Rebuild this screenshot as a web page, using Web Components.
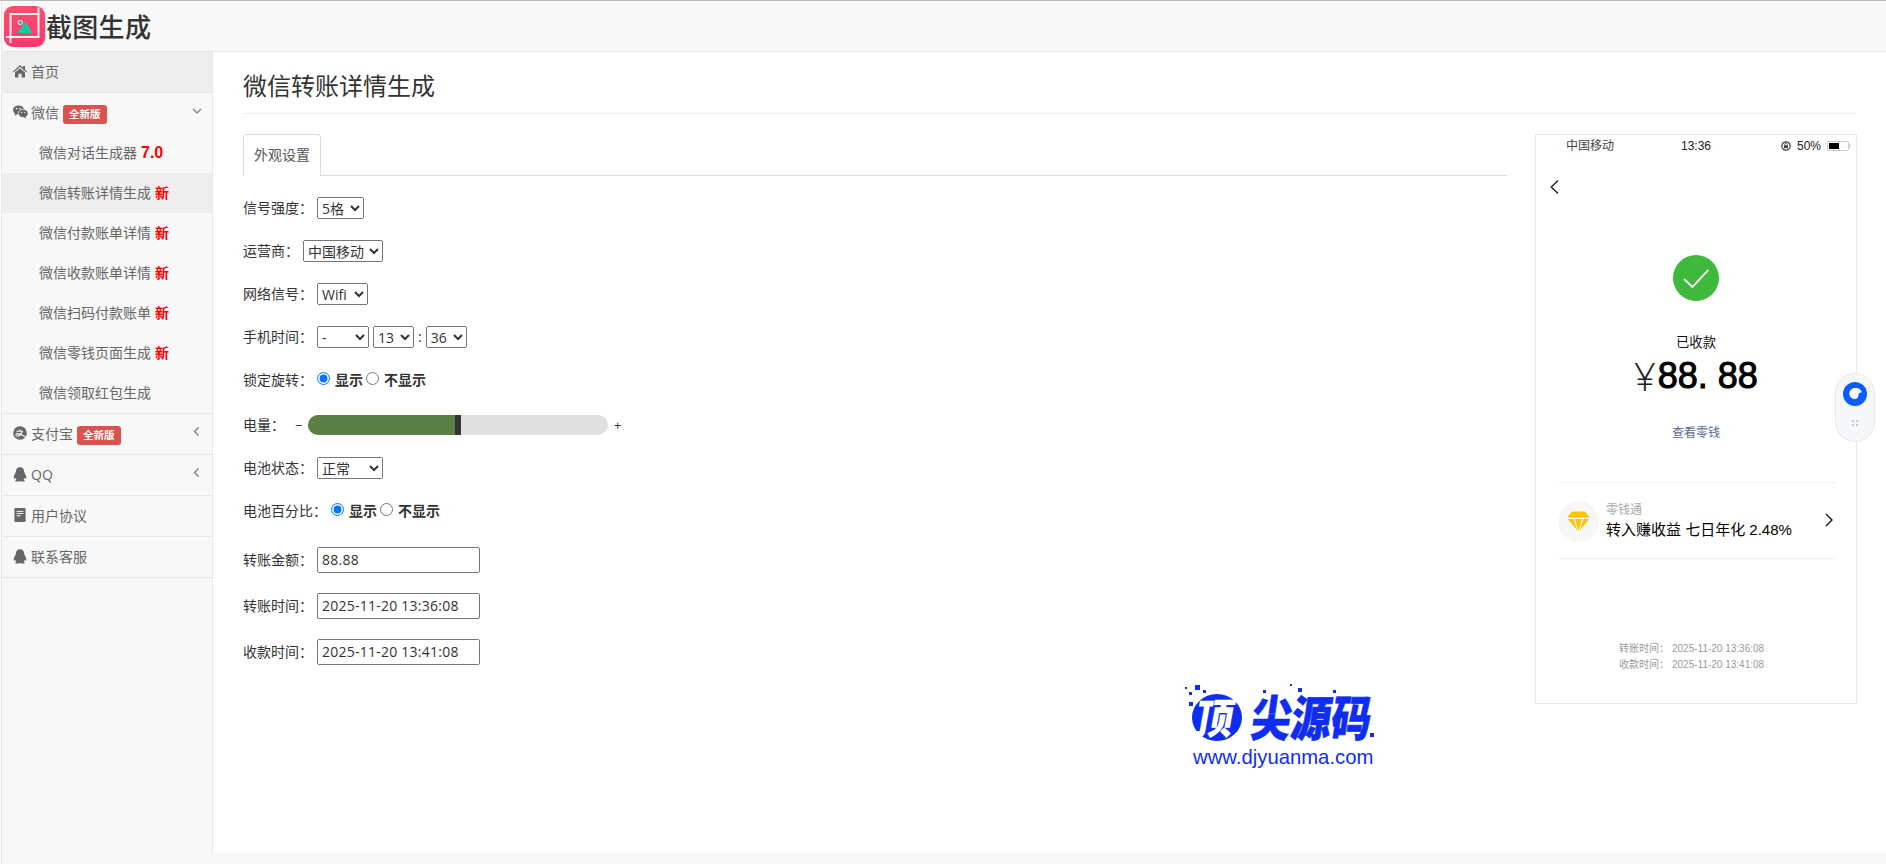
<!DOCTYPE html>
<html lang="zh">
<head>
<meta charset="utf-8">
<title>微信转账详情生成</title>
<style>
  html, body { margin: 0; background: #fff; }
  body {
    font: 14px/20px "Open Sans", "Noto Sans CJK SC", sans-serif;
    color: #333;
  }
</style>
</head>
<body>
<screen-app>
  <brand-bar slot="top">截图生成</brand-bar>
  <side-nav slot="side">
    <nav-row active icon="home">首页</nav-row>
    <nav-row icon="wechat" badge="全新版" arrow="down" open>
      微信
      <sub-item slot="sub" tag="7.0" big>微信对话生成器</sub-item>
      <sub-item slot="sub" tag="新" active>微信转账详情生成</sub-item>
      <sub-item slot="sub" tag="新">微信付款账单详情</sub-item>
      <sub-item slot="sub" tag="新">微信收款账单详情</sub-item>
      <sub-item slot="sub" tag="新">微信扫码付款账单</sub-item>
      <sub-item slot="sub" tag="新">微信零钱页面生成</sub-item>
      <sub-item slot="sub">微信领取红包生成</sub-item>
    </nav-row>
    <nav-row icon="alipay" badge="全新版" arrow="left">支付宝</nav-row>
    <nav-row icon="qq" arrow="left">QQ</nav-row>
    <nav-row icon="doc">用户协议</nav-row>
    <nav-row icon="qq">联系客服</nav-row>
  </side-nav>
  <page-main slot="main" heading="微信转账详情生成">
    <settings-form>
      <form-row label="信号强度："><select style="width:47px"><option>5格</option></select></form-row>
      <form-row label="运营商："><select style="width:80px"><option>中国移动</option></select></form-row>
      <form-row label="网络信号："><select style="width:51px"><option>Wifi</option></select></form-row>
      <form-row label="手机时间：">
        <select style="width:52px"><option>-</option></select>
        <select style="width:41px"><option>13</option></select>
        <span>:</span>
        <select style="width:41px"><option>36</option></select>
      </form-row>
      <form-row label="锁定旋转：">
        <radio-pair name="lock"></radio-pair>
      </form-row>
      <form-row class="battery" label="电量：">
        <battery-slider value="49"></battery-slider>
      </form-row>
      <form-row label="电池状态："><select style="width:66px"><option>正常</option></select></form-row>
      <form-row label="电池百分比：">
        <radio-pair name="percent"></radio-pair>
      </form-row>
      <form-row class="field first" label="转账金额："><input value="88.88"></form-row>
      <form-row class="field" label="转账时间："><input value="2025-11-20 13:36:08"></form-row>
      <form-row class="field" label="收款时间："><input value="2025-11-20 13:41:08"></form-row>
    </settings-form>
    <phone-preview slot="preview"></phone-preview>
    <site-watermark slot="over"></site-watermark>
    <float-widget slot="over"></float-widget>
  </page-main>
</screen-app>

<script>
const ICONS = {
  home: `<svg viewBox="0 0 14 14" width="14" height="14"><path fill="#666" d="M7 1 L10 3.8 V2 H12 V5.7 L14.2 7.8 L13.4 8.6 L7 2.8 L.6 8.6 L-.2 7.8 Z M2 8.6 L7 4.2 L12 8.6 V13.6 H8.6 V9.8 H5.4 V13.6 H2 Z"/></svg>`,
  wechat: `<svg viewBox="0 0 15 14" width="15" height="14"><ellipse cx="5.6" cy="5" rx="5.6" ry="4.6" fill="#666"/><path fill="#666" d="M2 8 L1.6 11 L5 8.6 Z"/><ellipse cx="10.2" cy="8.4" rx="5" ry="4.2" fill="#666" stroke="#f8f8f8" stroke-width=".8"/><path fill="#666" d="M12.4 11.4 L13.4 13.6 L10.6 12.2 Z"/><circle cx="3.7" cy="3.6" r=".8" fill="#f8f8f8"/><circle cx="7" cy="3.6" r=".8" fill="#f8f8f8"/><circle cx="8.6" cy="7.4" r=".6" fill="#f8f8f8"/><circle cx="11.8" cy="7.4" r=".6" fill="#f8f8f8"/></svg>`,
  alipay: `<svg viewBox="0 0 14 14" width="14" height="14"><circle cx="7" cy="7" r="6.8" fill="#666"/><path fill="none" stroke="#f8f8f8" stroke-width="1.1" d="M3.4 5.2 H10 M6.8 3.4 V5.2 M9.2 5.4 C8.4 8.4 6 10.4 4 10 C2.2 9.6 2.8 7.6 4.8 7.6 C7 7.6 9.6 9.6 12.6 11"/></svg>`,
  qq: `<svg viewBox="0 0 14 15" width="14" height="15"><path fill="#666" d="M7 .2 C9.8 .2 11 2.2 11.1 4.4 C11.1 5 11.2 5.4 11.6 6 C12.6 7.6 13.4 9.4 13.2 11 C13 12 12.4 11.8 11.7 10.7 C11.5 11.6 11.1 12.3 10.5 12.8 C11.4 13.1 11.9 13.5 11.7 14 C11.4 14.7 9.4 14.8 7.9 14.2 L6.1 14.2 C4.6 14.8 2.6 14.7 2.3 14 C2.1 13.5 2.6 13.1 3.5 12.8 C2.9 12.3 2.5 11.6 2.3 10.7 C1.6 11.8 1 12 .8 11 C.6 9.4 1.4 7.6 2.4 6 C2.8 5.4 2.9 5 2.9 4.4 C3 2.2 4.2 .2 7 .2 Z"/></svg>`,
  doc: `<svg viewBox="0 0 12 14" width="12" height="14"><path fill="#666" d="M1.6 0 H10.4 Q11.6 0 11.6 1.2 V12.8 Q11.6 14 10.4 14 H1.6 Q.4 14 .4 12.8 V1.2 Q.4 0 1.6 0 Z"/><path stroke="#f8f8f8" stroke-width="1" d="M2.6 3.4 H9.4 M2.6 5.6 H9.4 M2.6 7.8 H6.6"/></svg>`
};

function define(name, markup, props = {}) {
  const template = document.createElement("template");
  template.innerHTML = markup;
  customElements.define(name, class extends HTMLElement {
    constructor() {
      super();
      this.attachShadow({ mode: "open" }).append(template.content.cloneNode(true));
    }
    connectedCallback() {
      if (props.init) props.init.call(this, this.shadowRoot);
    }
  });
}

define("screen-app", `
  <style>
    :host { display: block; height: 865px; overflow: hidden; position: relative; }
    #line { height: 1px; background: #bbb; }
    #wrap {
      margin-left: 1px; border-left: 1px solid #e7e7e7; background: #f8f8f8;
      height: 863px; display: flex; flex-direction: column;
    }
    #body { display: flex; height: 801px; }
  </style>
  <div id="line"></div>
  <div id="wrap">
    <slot name="top"></slot>
    <div id="body">
      <slot name="side"></slot>
      <slot name="main"></slot>
    </div>
  </div>
`);

define("brand-bar", `
  <style>
    :host {
      display: flex; align-items: center; height: 50px; flex: none;
      border-bottom: 1px solid #e7e7e7; padding-left: 2px;
      font-size: 26px; font-weight: 500; color: #333; letter-spacing: .3px;
      font-family: "Noto Sans CJK SC", sans-serif;
    }
    svg { display: block; margin-top: 1px; }
    span { margin-left: 1px; }
  </style>
  <svg width="41" height="41" viewBox="0 0 41 41">
    <defs><linearGradient id="g" x1="0" y1="0" x2="0" y2="1"><stop offset="0" stop-color="#ff4d6e"/><stop offset="1" stop-color="#f93a6c"/></linearGradient></defs>
    <rect width="41" height="41" rx="9" fill="url(#g)"/>
    <path fill="#fff" fill-opacity=".9" d="M5.5 7 H35.5 V9 H7.5 V37 H5.5 Z M33.5 1.5 H35.5 V32 H2 V30 H33.5 Z"/>
    <path fill="#17c9a3" d="M13.3 27 L18.6 19.6 L21 16 L24 19.6 L28.2 27 Z"/>
    <circle cx="16.2" cy="16.4" r="2.2" fill="#17c9a3" stroke="#fff" stroke-width=".8"/>
  </svg>
  <span><slot></slot></span>
`);

define("side-nav", `
  <style>
    :host {
      display: block; width: 210px; flex: none; box-sizing: content-box;
      border-right: 1px solid #e7e7e7; background: #f8f8f8; color: #666;
    }
  </style>
  <slot></slot>
`);

define("nav-row", `
  <style>
    :host { display: block; border-bottom: 1px solid #e7e7e7; }
    #head {
      display: flex; align-items: center; height: 40px; padding-left: 9px;
      position: relative; color: #666;
    }
    :host([active]) #head { background: #eee; }
    #ico { width: 18px; display: flex; justify-content: center; margin-top: -2px; flex: none; }
    #txt { margin-left: 2px; }
    #badge {
      display: none; margin-left: 4px; margin-top: 3px; background: #d9534f; color: #fff; border-radius: 3px;
      font-size: 10.5px; font-weight: 700; line-height: 19px; height: 19px; padding: 0 6px;
    }
    #arrow { display: none; position: absolute; right: 9px; top: 12px; }
  </style>
  <div id="head">
    <span id="ico"></span><span id="txt"><slot></slot></span><span id="badge"></span>
    <svg id="arrow" width="12" height="12" viewBox="0 0 12 12"></svg>
  </div>
  <slot name="sub"></slot>
`, {
  init(root) {
    root.getElementById("ico").innerHTML = ICONS[this.getAttribute("icon")] || "";
    const badge = this.getAttribute("badge");
    if (badge) {
      const b = root.getElementById("badge");
      b.textContent = badge;
      b.style.display = "inline-block";
    }
    const arrow = this.getAttribute("arrow");
    if (arrow) {
      const a = root.getElementById("arrow");
      a.style.display = "block";
      a.innerHTML = arrow === "down"
        ? `<path d="M2 4 L6 8 L10 4" fill="none" stroke="#777" stroke-width="1.2"/>`
        : `<path d="M7.5 1.5 L3.5 5.5 L7.5 9.5" fill="none" stroke="#777" stroke-width="1.2"/>`;
    }
  }
});

define("sub-item", `
  <style>
    :host {
      display: flex; align-items: center; height: 40px; padding-left: 37px; color: #666;
    }
    :host([active]) { background: #eee; }
    b { color: #f00; margin-left: 4px; }
    :host([big]) b { font-size: 16px; margin-left: 4px; font-family: "Liberation Sans", sans-serif; }
  </style>
  <slot></slot><b></b>
`, {
  init(root) {
    root.querySelector("b").textContent = this.getAttribute("tag") || "";
  }
});

define("page-main", `
  <style>
    :host { display: block; flex: 1; background: #fff; padding: 0 29px 0 30px; position: relative; min-width: 0; }
    h1 {
      font-size: 24px; font-weight: 400; line-height: 34px; margin: 0; padding-top: 16px; padding-bottom: 11px;
      border-bottom: 1px solid #eee; color: #333; font-family: "Noto Sans CJK SC", sans-serif;
    }
    #cols { display: grid; grid-template-columns: 1fr 322px; column-gap: 28px; margin-top: 20px; }
    #tabs { border-bottom: 1px solid #ddd; height: 41px; display: flex; }
    #tab {
      box-sizing: border-box; padding: 0 10px; border: 1px solid #ddd; border-bottom: 0;
      border-radius: 4px 4px 0 0; background: #fff; line-height: 40px; color: #555; margin-bottom: -1px; height: 42px;
    }
  </style>
  <h1></h1>
  <div id="cols">
    <div>
      <div id="tabs"><div id="tab">外观设置</div></div>
      <slot></slot>
    </div>
    <slot name="preview"></slot>
  </div>
  <slot name="over"></slot>
`, {
  init(root) {
    root.querySelector("h1").textContent = this.getAttribute("heading");
  }
});

define("settings-form", `
  <style>:host { display: block; padding-top: 11px; }</style>
  <slot></slot>
`);

define("form-row", `
  <style>
    :host { display: flex; align-items: center; height: 42.8px; gap: 4px; color: #333; }
    :host(.battery) { margin: 3px 0 0; gap: 10px; }
    :host(.field) { height: 46px; }
    :host(.first) { margin-top: 4.5px; }
    ::slotted(select) {
      font: 14px "Open Sans", "Noto Sans CJK SC", sans-serif; height: 22px; padding: 0; color: #333;
    }
    ::slotted(input) {
      font: 14px "Open Sans", "Noto Sans CJK SC", sans-serif; color: #333; width: 163px; height: 26px;
      box-sizing: border-box; padding: 1px 4px; border: 1px solid #767676; border-radius: 2px; letter-spacing: .24px;
    }
  </style>
  <span></span><slot></slot>
`, {
  init(root) {
    root.querySelector("span").textContent = this.getAttribute("label");
  }
});

define("radio-pair", `
  <style>
    :host { display: flex; align-items: center; font-weight: 700; }
    input { margin: 0 5px 2px 0; width: 13px; height: 13px; }
    label { display: flex; align-items: center; margin-right: 3px; }
  </style>
  <label><input type="radio" name="a" checked>显示</label>
  <label><input type="radio" name="a">不显示</label>
`);

define("battery-slider", `
  <style>
    :host { display: flex; align-items: center; font-size: 13px; }
    #track { width: 300px; height: 20px; border-radius: 10px; background: #e0e0e0; margin: 0 6px; overflow: hidden; display: flex; }
    #fill { height: 100%; background: #5b7f47; }
    #thumb { width: 6px; height: 100%; background: #333; }
    span { width: 7px; text-align: center; }
  </style>
  <span>−</span>
  <div id="track"><div id="fill"></div><div id="thumb"></div></div>
  <span>+</span>
`, {
  init(root) {
    root.getElementById("fill").style.width = this.getAttribute("value") + "%";
  }
});

define("phone-preview", `
  <style>
    :host {
      display: block; height: 570px; box-sizing: border-box; border: 1px solid #e7e7e7; background: #fff;
      font-family: "Liberation Sans", "Noto Sans CJK SC", sans-serif; color: #111;
    }
    #status {
      display: grid; grid-template-columns: 1fr auto 1fr; height: 21px; align-items: center; font-size: 12px;
      padding: 0 5px; color: #222;
    }
    #status .carrier { color: #444; padding-left: 25px; }
    #status .right { display: flex; justify-content: flex-end; align-items: center; gap: 6px; }
    #back { display: block; margin: 24px 0 0 14px; }
    #check { display: block; margin: 61px auto 0; }
    #state { text-align: center; margin-top: 32px; font-size: 13.3px; line-height: 20px; }
    #amount {
      display: flex; justify-content: center; align-items: center; height: 40px; margin-top: 3px;
      font-size: 36px; line-height: 40px; color: #000;
    }
    #amount i { font: 300 38px/40px "Open Sans", sans-serif; color: #222; margin-right: 2px; }
    #amount b { font-weight: 400; -webkit-text-stroke: 1px #000; white-space: pre; }
    #link { text-align: center; margin-top: 29px; font-size: 12px; line-height: 16px; color: #576b95; }
    #row {
      margin: 41px 21px 0 22px; height: 75px; border-top: 1px solid #f1f1f1; border-bottom: 1px solid #f1f1f1;
      display: flex; align-items: center; position: relative;
    }
    #coin {
      width: 41px; height: 41px; border-radius: 50%; background: #f7f7f7; flex: none;
      display: flex; align-items: center; justify-content: center; margin-top: 1px;
    }
    #info { margin-left: 7px; }
    #info div:first-child { font-size: 12px; line-height: 17px; color: #aaa; }
    #info div:last-child { font-size: 15px; line-height: 21px; color: #000; white-space: pre; }
    #go { position: absolute; right: 2px; top: 30px; }
    #times { margin: 82px 0 0 83px; font-size: 10px; line-height: 16px; color: #999; }
    #times span { display: inline-block; width: 53px; }
  </style>
  <div id="status">
    <span class="carrier">中国移动</span>
    <span>13:36</span>
    <span class="right">
      <svg width="10" height="10" viewBox="0 0 10 10"><circle cx="5" cy="5" r="4.2" fill="none" stroke="#444" stroke-width="1.2"/><rect x="3" y="4.2" width="4" height="3" fill="#444"/><path d="M3.8 4.2 V3.3 a1.2 1.2 0 0 1 2.4 0 V4.2" fill="none" stroke="#444" stroke-width=".8"/></svg>
      <span>50%</span>
      <svg width="24" height="10" viewBox="0 0 24 10"><rect x=".5" y=".5" width="21" height="9" rx="1.5" fill="#fff" stroke="#ccc"/><rect x="2" y="2" width="10" height="6" fill="#000"/><rect x="22.4" y="3" width="1.2" height="4" fill="#ccc"/></svg>
    </span>
  </div>
  <svg id="back" width="9" height="14" viewBox="0 0 9 14"><path d="M8 .5 L1.2 7 L8 13.5" fill="none" stroke="#111" stroke-width="1.2"/></svg>
  <svg id="check" width="46" height="46" viewBox="0 0 46 46"><circle cx="23" cy="23" r="23" fill="#3eb93b"/><path d="M11 24 L19.4 32 L35.4 14.8" fill="none" stroke="#fff" stroke-width="1.8"/></svg>
  <div id="state">已收款</div>
  <div id="amount"><i>¥</i><b>88. 88</b></div>
  <div id="link">查看零钱</div>
  <div id="row">
    <div id="coin">
      <svg width="23" height="21" viewBox="0 0 23 21"><path fill="#ffc300" d="M5 .5 H18 L22.8 6.6 H.2 Z M.8 8 H6.6 L10.4 19.4 Z M8.2 8 H14.8 L11.5 20.6 Z M16.4 8 H22.2 L12.6 19.4 Z"/></svg>
    </div>
    <div id="info"><div>零钱通</div><div>转入赚收益 七日年化 2.48%</div></div>
    <svg id="go" width="8" height="14" viewBox="0 0 8 14"><path d="M1 1 L7 7 L1 13" fill="none" stroke="#111" stroke-width="1.4"/></svg>
  </div>
  <div id="times">
    <div><span>转账时间：</span>2025-11-20 13:36:08</div>
    <div><span>收款时间：</span>2025-11-20 13:41:08</div>
  </div>
`);

define("site-watermark", `
  <style>
    :host { position: absolute; left: 972px; top: 633px; width: 192px; height: 85px; color: #0f2df0; display: block; }
    #disc { position: absolute; left: 7px; top: 9px; width: 50px; height: 47px; border-radius: 50%; background: #0f2df0; }
    #first {
      position: absolute; left: 11px; top: 6px; font: 900 38px/50px "Noto Sans CJK SC", sans-serif; color: #fff;
      transform: skewX(-10deg) scaleY(1.1);
    }
    #rest {
      position: absolute; left: 67px; top: 6px; font: 900 40px/50px "Noto Sans CJK SC", sans-serif;
      -webkit-text-stroke: .6px #0f2df0; transform: skewX(-8deg) scaleY(1.2); white-space: nowrap;
    }
    #url { position: absolute; left: 8px; top: 61px; font: 20.3px/22px "Liberation Sans", sans-serif; white-space: nowrap; }
    i { position: absolute; background: #0f2df0; }
  </style>
  <div id="disc"></div>
  <div id="first">顶</div>
  <div id="rest">尖源码</div>
  <div id="url">www.djyuanma.com</div>
  <i style="left:0;top:2px;width:2px;height:2px"></i>
  <i style="left:10px;top:0;width:5px;height:5px"></i>
  <i style="left:4px;top:7px;width:3px;height:3px"></i>
  <i style="left:18px;top:5px;width:3px;height:3px"></i>
  <i style="left:4px;top:17px;width:4px;height:4px"></i>
  <i style="left:78px;top:5px;width:3px;height:3px"></i>
  <i style="left:105px;top:-1px;width:2px;height:2px"></i>
  <i style="left:113px;top:3px;width:4px;height:4px"></i>
  <i style="left:148px;top:5px;width:3px;height:3px"></i>
  <i style="left:185px;top:48px;width:4px;height:4px"></i>
  <i style="left:174px;top:52px;width:2px;height:2px"></i>
`);

define("float-widget", `
  <style>
    :host {
      position: absolute; left: 1622px; top: 321px; width: 40px; height: 69px; box-sizing: border-box;
      display: flex; flex-direction: column; align-items: center; padding-top: 8px;
      background: #f5f7fb; border: 1px solid #e8e8e8; border-radius: 20px;
    }
    #dots { margin-top: 14px; display: block; }
  </style>
  <svg width="24" height="24" viewBox="0 0 24 24"><circle cx="12" cy="12" r="12" fill="#0c5cff"/><path fill="#fff" d="M12 6 C16 6 18.6 8 18.6 10.6 C16.8 10.4 15.4 11.4 15.4 13.4 C15.4 15 14 17 11.4 17 C8.4 17 6.4 14.6 6.4 11.6 C6.4 8.4 8.8 6 12 6 Z"/></svg>
  <svg id="dots" width="6" height="6" viewBox="0 0 6 6"><g fill="#c4c7cc"><rect width="2" height="2"/><rect x="4" width="2" height="2"/><rect y="4" width="2" height="2"/><rect x="4" y="4" width="2" height="2"/></g></svg>
`);
</script>
</body>
</html>
